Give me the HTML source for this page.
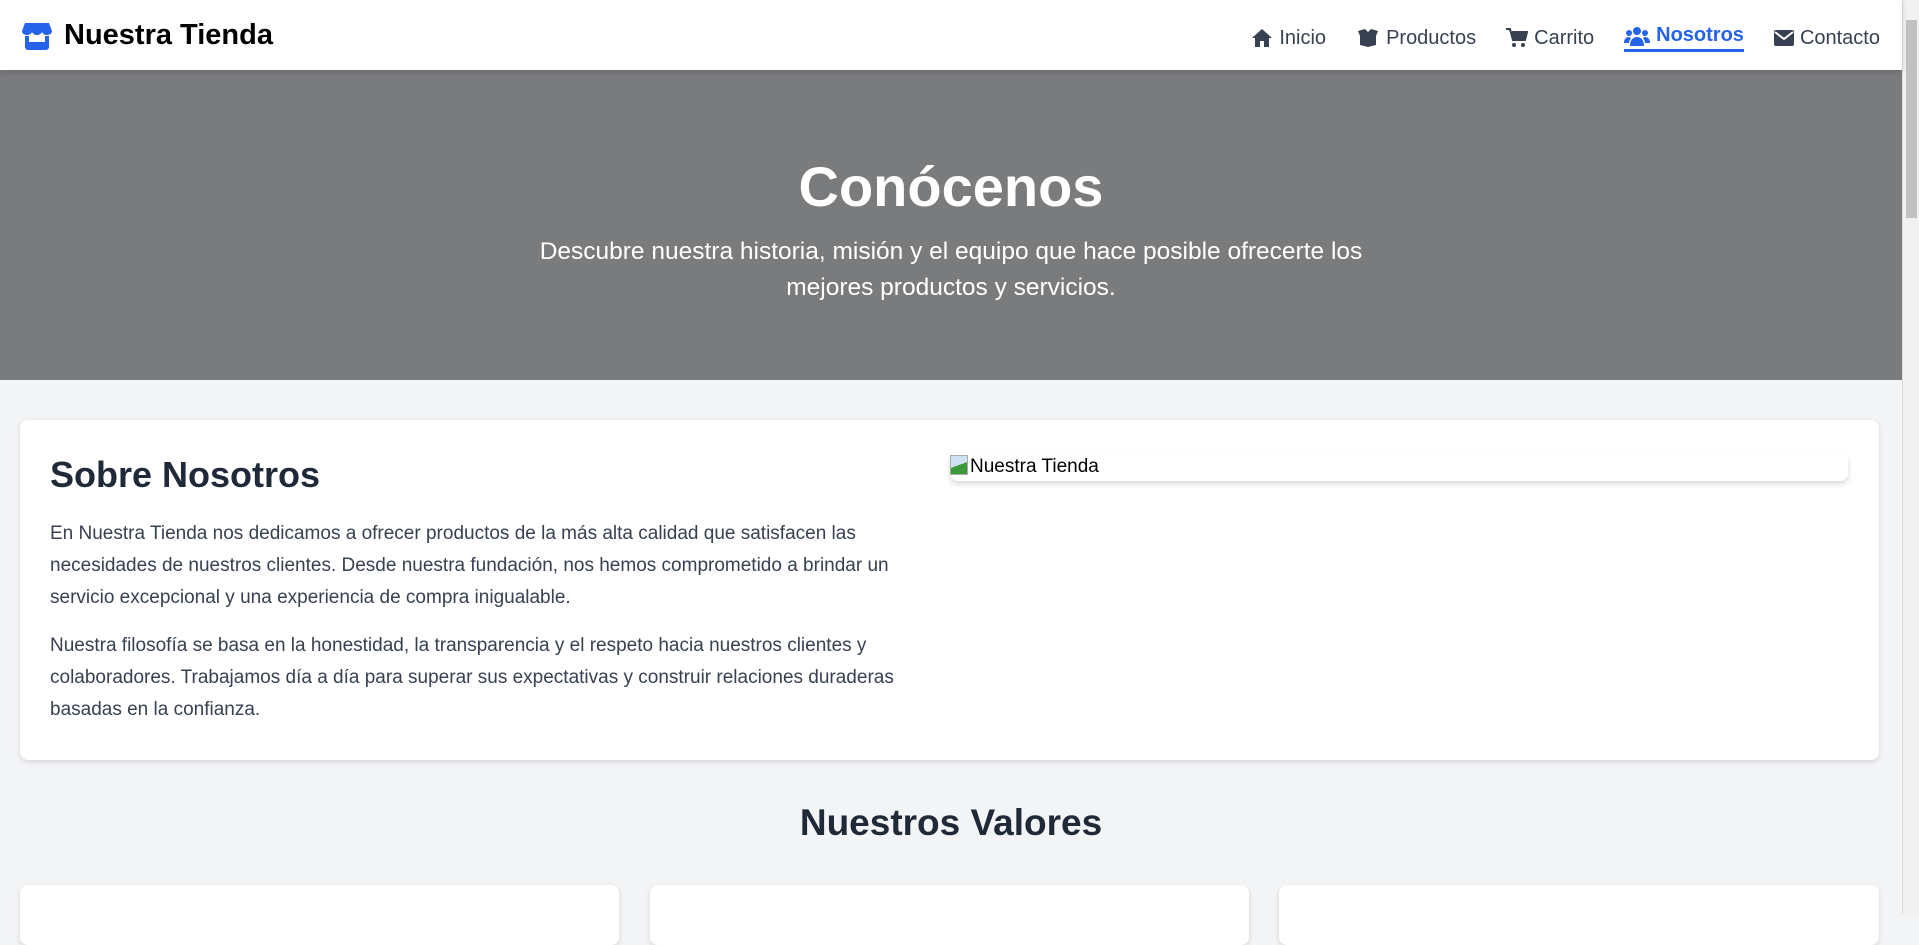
<!DOCTYPE html>
<html><head><meta charset="utf-8"><style>
*{margin:0;padding:0;box-sizing:border-box}
body{width:1919px;height:914px;overflow:hidden;background:#f3f4f6;font-family:"Liberation Sans",sans-serif;color:#1f2937;position:relative}
.nav{position:absolute;left:0;top:0;width:1902px;height:70px;background:#fff;box-shadow:0 2px 6px rgba(0,0,0,.15);z-index:2}
.logo{position:absolute;left:22px;top:19px;font-size:29px;font-weight:bold;color:#000;display:flex;align-items:center;gap:12px}
.links{position:absolute;right:22px;top:24px;display:flex;gap:30px;font-size:20px;color:#374151}
.links span{display:flex;align-items:center;gap:6px}
.links .act{color:#2563eb;border-bottom:3px solid #2563eb;padding-bottom:2px;font-weight:bold}
.sb{position:absolute;right:0;top:0;width:17px;height:914px;background:#f1f1f1;border-left:1px solid #ddd}
.sb div{position:absolute;left:3px;top:20px;width:11px;height:198px;background:#c1c1c1}
.hero{position:absolute;left:0;top:70px;width:1902px;height:310px;background:#7a7b7d;color:#fff;text-align:center}
.hero h1{font-size:56px;margin-top:82px;line-height:70px}
.hero p{font-size:24.5px;line-height:36px;width:900px;margin:12px auto 0}
.card{position:absolute;background:#fff;border-radius:8px;box-shadow:0 2px 6px rgba(0,0,0,.12)}
.about h2{position:absolute;left:30px;top:34px;font-size:36px}
.about p{position:absolute;left:30px;width:880px;font-size:19px;line-height:32px;color:#374151}
.img{position:absolute;left:930px;top:33px;width:898px;height:28px;border-radius:8px;box-shadow:0 3px 6px rgba(0,0,0,.15);font-size:19px;padding:3px 0 0 20px;color:#000}
.img i{position:absolute;left:0;top:2px;width:18px;height:20px;background:linear-gradient(160deg,#cfe0f0 50%,#3a9a3a 50%);border:1px solid #aaa}
h3{position:absolute;left:0;width:1902px;text-align:center;top:802px;font-size:37px}
</style></head><body>
<div class="nav">
<div class="logo"><svg width="30" height="30" viewBox="0 0 30 30"><path d="M3 2h24l3 8c0 3-3 4-5 4s-4-1-5-3c-1 2-3 3-5 3s-4-1-5-3c-1 2-3 3-5 3s-5-1-5-4z" fill="#2563eb"/><path d="M3 15h4v6h16v-6h4v11a3 3 0 0 1-3 3H6a3 3 0 0 1-3-3z" fill="#2563eb"/></svg>Nuestra Tienda</div>
<div class="links">
<span><svg width="22" height="20" viewBox="0 0 22 20"><path d="M11 1L1 10h3v9h5v-6h4v6h5v-9h3z" fill="#374151"/></svg>Inicio</span>
<span><svg width="24" height="20" viewBox="0 0 24 20"><path d="M2 3l7-2 3 3 3-3 7 2-2 5v9l-8 2-8-2V8z" fill="#374151"/></svg>Productos</span>
<span><svg width="22" height="20" viewBox="0 0 22 20"><path d="M0 1h4l3 11h12l2-8H6" fill="#374151" stroke="#374151" stroke-width="2"/><circle cx="8" cy="17" r="2" fill="#374151"/><circle cx="17" cy="17" r="2" fill="#374151"/></svg>Carrito</span>
<span class="act"><svg width="26" height="20" viewBox="0 0 26 20"><circle cx="13" cy="5" r="4" fill="#2563eb"/><circle cx="5" cy="7" r="3" fill="#2563eb"/><circle cx="21" cy="7" r="3" fill="#2563eb"/><path d="M6 20c0-6 3-9 7-9s7 3 7 9zM0 17c0-4 2-6 5-6l2 1c-1 2-2 3-2 5zM26 17c0-4-2-6-5-6l-2 1c1 2 2 3 2 5z" fill="#2563eb"/></svg>Nosotros</span>
<span><svg width="20" height="18" viewBox="0 0 20 18"><rect x="0" y="1" width="20" height="16" rx="2" fill="#374151"/><path d="M1 3l9 7 9-7" stroke="#fff" stroke-width="2" fill="none"/></svg>Contacto</span>
</div></div>
<div class="hero"><h1>Conócenos</h1><p>Descubre nuestra historia, misión y el equipo que hace posible ofrecerte los mejores productos y servicios.</p></div>
<div class="card about" style="left:20px;top:420px;width:1859px;height:340px">
<h2>Sobre Nosotros</h2>
<p style="top:98px">En Nuestra Tienda nos dedicamos a ofrecer productos de la más alta calidad que satisfacen las necesidades de nuestros clientes. Desde nuestra fundación, nos hemos comprometido a brindar un servicio excepcional y una experiencia de compra inigualable.</p>
<p style="top:210px">Nuestra filosofía se basa en la honestidad, la transparencia y el respeto hacia nuestros clientes y colaboradores. Trabajamos día a día para superar sus expectativas y construir relaciones duraderas basadas en la confianza.</p>
<div class="img"><i></i>Nuestra Tienda</div>
</div>
<h3>Nuestros Valores</h3>
<div class="card" style="left:20px;top:885px;width:599px;height:60px"></div>
<div class="card" style="left:650px;top:885px;width:599px;height:60px"></div>
<div class="card" style="left:1279px;top:885px;width:600px;height:60px"></div>
<div class="sb"><div></div></div>
</body></html>
